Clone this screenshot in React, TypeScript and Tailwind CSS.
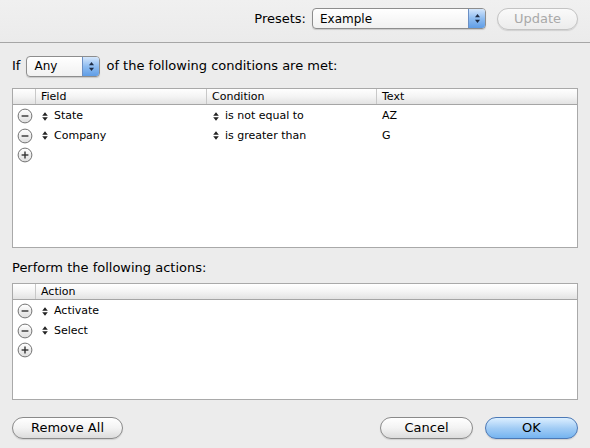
import React from "react";

function Stepper() {
    return (
        <svg width="6" height="9" viewBox="0 0 6 9" className="shrink-0">
            <path d="M3 0.3 L5.8 3.7 L0.2 3.7 Z" fill="#222" />
            <path d="M3 8.7 L5.8 5.3 L0.2 5.3 Z" fill="#222" />
        </svg>
    );
}

function RoundButton({ plus }: { plus?: boolean }) {
    return (
        <svg width="16" height="16" viewBox="0 0 16 16" className="shrink-0">
            <defs>
                <linearGradient id="rb" x1="0" y1="0" x2="0" y2="1">
                    <stop offset="0" stopColor="#ffffff" />
                    <stop offset="1" stopColor="#dedede" />
                </linearGradient>
            </defs>
            <circle cx="8" cy="8" r="6.9" fill="url(#rb)" stroke="#747474" strokeWidth="1" />
            <path d="M4.6 8 H11.4" stroke="#333" strokeWidth="1.4" />
            {plus && <path d="M8 4.6 V11.4" stroke="#333" strokeWidth="1.4" />}
        </svg>
    );
}

function PopUp({ label, width }: { label: string; width: string }) {
    return (
        <div className={`${width} h-[21px] flex items-stretch rounded-[4px] border border-[#8d8d8d] bg-gradient-to-b from-white to-[#f1f1f1] shadow-[0_1px_1px_rgba(0,0,0,0.15)] overflow-hidden`}>
            <div className="flex-1 flex items-center pl-[7px] text-[12px]">{label}</div>
            <div className="w-[17px] flex items-center justify-center border-l border-[#6b8fc4] bg-gradient-to-b from-[#d4e6fb] via-[#8ebcf0] to-[#5f9de6]">
                <svg width="7" height="11" viewBox="0 0 7 11">
                    <path d="M3.5 1 L6 4.2 L1 4.2 Z" fill="#1d2b44" />
                    <path d="M3.5 10 L6 6.8 L1 6.8 Z" fill="#1d2b44" />
                </svg>
            </div>
        </div>
    );
}

function PillButton({ label, width, primary, disabled }: { label: string; width: string; primary?: boolean; disabled?: boolean }) {
    const look = primary
        ? "border-[#4c79b6] bg-gradient-to-b from-[#dcefff] via-[#a3cdf5] to-[#74b4f0] text-black"
        : disabled
        ? "border-[#c3c3c3] bg-gradient-to-b from-[#fafafa] to-[#ececec] text-[#a9a9a9]"
        : "border-[#8a8a8a] bg-gradient-to-b from-white via-[#f3f3f3] to-[#dcdcdc] text-black";
    return (
        <div className={`${width} h-[22px] flex items-center justify-center rounded-full border text-[13px] shadow-[0_1px_1px_rgba(0,0,0,0.12)] ${look}`}>
            {label}
        </div>
    );
}

function HeaderCell({ label, className }: { label: string; className: string }) {
    return <div className={`${className} border-r border-[#c8c8c8] pl-[5px] pt-[2px] flex items-center`}>{label}</div>;
}

export default function App() {
    const conditions = [
        { field: "State", condition: "is not equal to", text: "AZ" },
        { field: "Company", condition: "is greater than", text: "G" },
    ];
    const actions = ["Activate", "Select"];

    return (
        <div className="w-[590px] h-[448px] bg-[#ececec] text-black font-['DejaVu_Sans',sans-serif] text-[12px] overflow-hidden">
            {/* toolbar */}
            <div className="h-[43px] flex items-start justify-end pt-[8px] pr-[12px] border-b border-[#a6a6a6] bg-gradient-to-b from-[#f0f0f0] to-[#ebebeb]">
                <span className="text-[13px] mr-[6px] leading-[21px]">Presets:</span>
                <PopUp label="Example" width="w-[174px]" />
                <div className="ml-[11px]">
                    <PillButton label="Update" width="w-[81px]" disabled />
                </div>
            </div>

            <div className="px-[12px]">
                <div className="mt-[12px] h-[22px] flex items-center text-[13px]">
                    <span className="mr-[6px]">If</span>
                    <PopUp label="Any" width="w-[74px]" />
                    <span className="ml-[6px]">of the following conditions are met:</span>
                </div>

                {/* conditions table */}
                <div className="mt-[11px] h-[160px] border border-[#a9a9a9] bg-white text-[11px]">
                    <div className="h-[16px] flex border-b border-[#a5a5a5] bg-gradient-to-b from-white via-[#f4f4f4] to-[#e3e3e3]">
                        <div className="w-[23px] border-r border-[#c8c8c8]" />
                        <HeaderCell label="Field" className="w-[171px]" />
                        <HeaderCell label="Condition" className="w-[170px]" />
                        <div className="flex-1 pl-[5px] pt-[2px] flex items-center">Text</div>
                    </div>
                    <div className="pt-[1.5px]">
                        {conditions.map((c) => (
                            <div key={c.field} className="h-[19.5px] flex items-center">
                                <div className="w-[23px] flex justify-center">
                                    <RoundButton />
                                </div>
                                <div className="w-[171px] flex items-center pl-[6px] gap-[6px]">
                                    <Stepper />
                                    <span>{c.field}</span>
                                </div>
                                <div className="w-[170px] flex items-center pl-[6px] gap-[6px]">
                                    <Stepper />
                                    <span>{c.condition}</span>
                                </div>
                                <div className="flex-1 pl-[5px]">{c.text}</div>
                            </div>
                        ))}
                        <div className="h-[19.5px] flex items-center">
                            <div className="w-[23px] flex justify-center">
                                <RoundButton plus />
                            </div>
                        </div>
                    </div>
                </div>

                <div className="mt-[10px] h-[20px] flex items-center text-[13px]">Perform the following actions:</div>

                {/* actions table */}
                <div className="mt-[5px] h-[117px] border border-[#a9a9a9] bg-white text-[11px]">
                    <div className="h-[16px] flex border-b border-[#a5a5a5] bg-gradient-to-b from-white via-[#f4f4f4] to-[#e3e3e3]">
                        <div className="w-[23px] border-r border-[#c8c8c8]" />
                        <div className="flex-1 pl-[5px] pt-[2px] flex items-center">Action</div>
                    </div>
                    <div className="pt-[1.5px]">
                        {actions.map((a) => (
                            <div key={a} className="h-[19.5px] flex items-center">
                                <div className="w-[23px] flex justify-center">
                                    <RoundButton />
                                </div>
                                <div className="flex items-center pl-[6px] gap-[6px]">
                                    <Stepper />
                                    <span>{a}</span>
                                </div>
                            </div>
                        ))}
                        <div className="h-[19.5px] flex items-center">
                            <div className="w-[23px] flex justify-center">
                                <RoundButton plus />
                            </div>
                        </div>
                    </div>
                </div>

                {/* footer */}
                <div className="mt-[17px] flex items-center">
                    <PillButton label="Remove All" width="w-[111px]" />
                    <div className="flex-1" />
                    <PillButton label="Cancel" width="w-[93px]" />
                    <div className="ml-[12px]">
                        <PillButton label="OK" width="w-[93px]" primary />
                    </div>
                </div>
            </div>
        </div>
    );
}
